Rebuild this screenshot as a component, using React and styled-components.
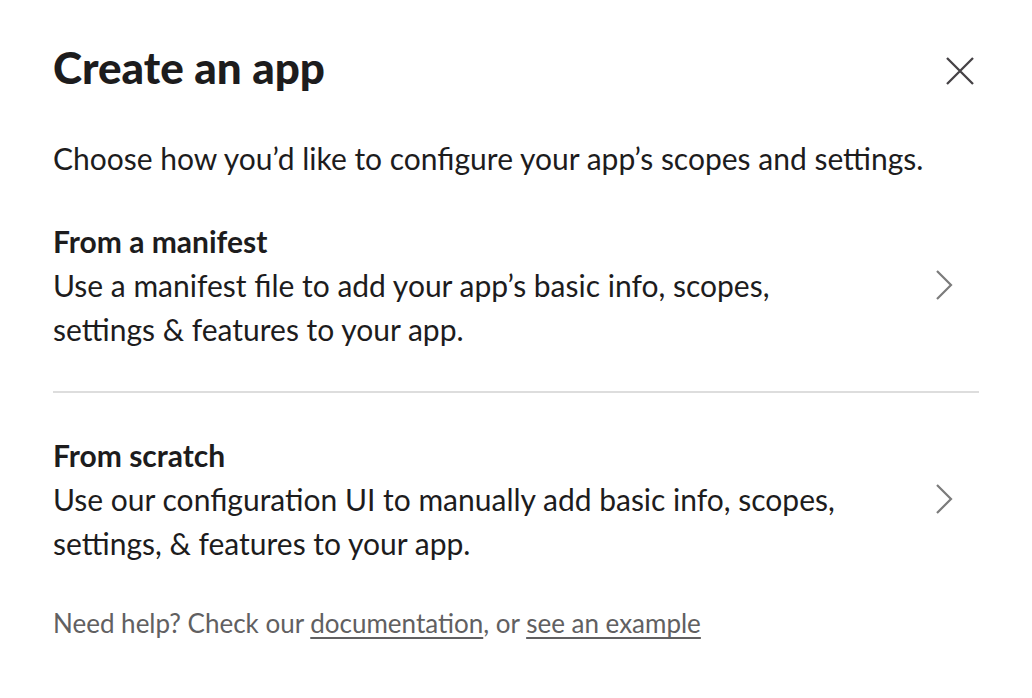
import styled, { createGlobalStyle } from "styled-components";

const GlobalStyle = createGlobalStyle`
  html, body {
    margin: 0;
    padding: 0;
    background: #ffffff;
  }
  body {
    font-family: Lato, "Noto Sans", sans-serif;
    color: #1d1c1d;
  }
`;

const Modal = styled.div`
  width: 1032px;
  height: 698px;
  box-sizing: border-box;
  padding: 38px 53px 0 53px;
  display: flex;
  flex-direction: column;
`;

const Header = styled.div`
  display: flex;
  align-items: center;
  justify-content: space-between;
`;

const Title = styled.h1`
  margin: 0;
  font-size: 44px;
  font-weight: 900;
  line-height: 58px;
  color: #1d1c1d;
`;

const CloseButton = styled.button`
  border: none;
  background: none;
  padding: 0;
  margin: 8px 1px 0 0;
  width: 36px;
  height: 36px;
  display: flex;
  align-items: center;
  justify-content: center;
  color: #454245;
  cursor: pointer;
`;

const Intro = styled.p`
  margin: 40px 0 0 0;
  font-size: 30px;
  line-height: 44px;
`;

const Option = styled.div`
  display: flex;
  align-items: center;
  justify-content: space-between;
  padding: ${(p) => (p.$first ? "39px 0 40px" : "40px 0 0")};
  border-bottom: ${(p) => (p.$first ? "2px solid #dddddd" : "none")};
  cursor: pointer;
`;

const OptionText = styled.div`
  display: flex;
  flex-direction: column;
`;

const OptionTitle = styled.div`
  font-size: 30px;
  font-weight: 700;
  line-height: 44px;
`;

const OptionDesc = styled.div`
  font-size: 30px;
  line-height: 44px;
  max-width: 800px;
`;

const Chevron = styled.div`
  color: #7c7c7c;
  margin-right: 24px;
  display: flex;
`;

const Footer = styled.p`
  margin: 40px 0 0 0;
  font-size: 26px;
  line-height: 36px;
  color: #616061;

  a {
    color: #616061;
    text-decoration: underline;
    text-underline-offset: 4px;
  }
`;

const ChevronIcon = () => (
  <svg width="20" height="32" viewBox="0 0 20 32" fill="none">
    <path d="M2 2 L16 16 L2 30" stroke="currentColor" strokeWidth="2.2" />
  </svg>
);

const CloseIcon = () => (
  <svg width="30" height="30" viewBox="0 0 30 30" fill="none">
    <path d="M2 2 L28 28 M28 2 L2 28" stroke="currentColor" strokeWidth="2.3" />
  </svg>
);

const options = [
  {
    title: "From a manifest",
    desc: "Use a manifest file to add your app’s basic info, scopes, settings & features to your app.",
  },
  {
    title: "From scratch",
    desc: "Use our configuration UI to manually add basic info, scopes, settings, & features to your app.",
  },
];

export default function App() {
  return (
    <>
      <GlobalStyle />
      <Modal>
        <Header>
          <Title>Create an app</Title>
          <CloseButton aria-label="Close">
            <CloseIcon />
          </CloseButton>
        </Header>
        <Intro>Choose how you’d like to configure your app’s scopes and settings.</Intro>
        {options.map((o, i) => (
          <Option key={o.title} $first={i === 0}>
            <OptionText>
              <OptionTitle>{o.title}</OptionTitle>
              <OptionDesc>{o.desc}</OptionDesc>
            </OptionText>
            <Chevron>
              <ChevronIcon />
            </Chevron>
          </Option>
        ))}
        <Footer>
          Need help? Check our <a href="#">documentation</a>, or <a href="#">see an example</a>
        </Footer>
      </Modal>
    </>
  );
}
